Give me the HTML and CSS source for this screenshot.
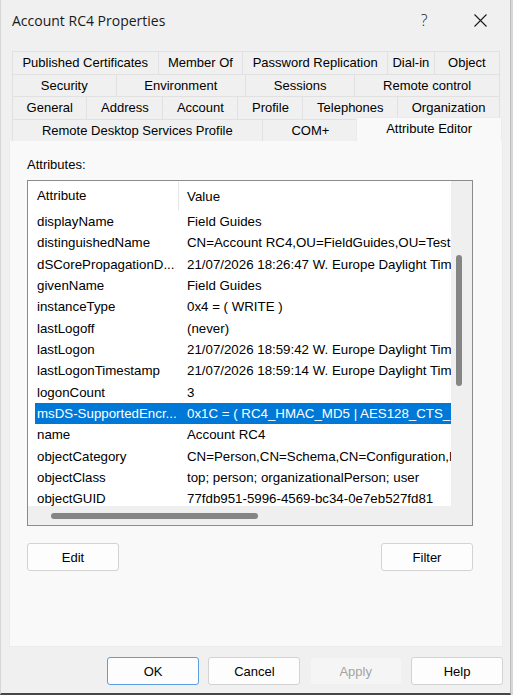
FILE: index.html
```html
<!DOCTYPE html>
<html>
<head>
<meta charset="utf-8">
<link rel="stylesheet" href="styles.css">
</head>
<body>
<div class="window">
  <div class="titlebar">
    <span class="title">Account RC4 Properties</span>
    <span class="help">?</span>
    <span class="close"><svg width="13" height="13" viewBox="0 0 13 13"><path d="M0.5 0.5 L12.5 12.5 M12.5 0.5 L0.5 12.5" stroke="#1a1a1a" stroke-width="1.1" fill="none"/></svg></span>
  </div>
  <div class="tabs">
    <div class="tabrow">
      <div class="tab">Published Certificates</div>
      <div class="tab">Member Of</div>
      <div class="tab">Password Replication</div>
      <div class="tab narrow">Dial-in</div>
      <div class="tab wide">Object</div>
    </div>
    <div class="tabrow">
      <div class="tab">Security</div>
      <div class="tab">Environment</div>
      <div class="tab">Sessions</div>
      <div class="tab">Remote control</div>
    </div>
    <div class="tabrow">
      <div class="tab">General</div>
      <div class="tab">Address</div>
      <div class="tab">Account</div>
      <div class="tab">Profile</div>
      <div class="tab">Telephones</div>
      <div class="tab">Organization</div>
    </div>
    <div class="tabrow">
      <div class="tab">Remote Desktop Services Profile</div>
      <div class="tab">COM+</div>
      <div class="tab active">Attribute Editor</div>
    </div>
  </div>
  <div class="panel">
    <div class="label">Attributes:</div>
    <div class="listbox">
      <div class="listmain">
        <div class="listcontent">
          <div class="lhead"><div class="c1">Attribute</div><div class="c2">Value</div></div>
          <div class="lrow"><div class="c1">displayName</div><div class="c2">Field Guides</div></div>
          <div class="lrow"><div class="c1">distinguishedName</div><div class="c2">CN=Account RC4,OU=FieldGuides,OU=Test,DC=corp,DC=local</div></div>
          <div class="lrow"><div class="c1">dSCorePropagationD...</div><div class="c2">21/07/2026 18:26:47 W. Europe Daylight Time</div></div>
          <div class="lrow"><div class="c1">givenName</div><div class="c2">Field Guides</div></div>
          <div class="lrow"><div class="c1">instanceType</div><div class="c2">0x4 = ( WRITE )</div></div>
          <div class="lrow"><div class="c1">lastLogoff</div><div class="c2">(never)</div></div>
          <div class="lrow"><div class="c1">lastLogon</div><div class="c2">21/07/2026 18:59:42 W. Europe Daylight Time</div></div>
          <div class="lrow"><div class="c1">lastLogonTimestamp</div><div class="c2">21/07/2026 18:59:14 W. Europe Daylight Time</div></div>
          <div class="lrow"><div class="c1">logonCount</div><div class="c2">3</div></div>
          <div class="lrow selected"><div class="c1">msDS-SupportedEncr...</div><div class="c2">0x1C = ( RC4_HMAC_MD5 | AES128_CTS_HMAC_SHA1_96 | AES256_CTS_HMAC_SHA1_96 )</div></div>
          <div class="lrow"><div class="c1">name</div><div class="c2">Account RC4</div></div>
          <div class="lrow"><div class="c1">objectCategory</div><div class="c2">CN=Person,CN=Schema,CN=Configuration,DC=corp,DC=local</div></div>
          <div class="lrow"><div class="c1">objectClass</div><div class="c2">top; person; organizationalPerson; user</div></div>
          <div class="lrow"><div class="c1">objectGUID</div><div class="c2">77fdb951-5996-4569-bc34-0e7eb527fd81</div></div>
        </div>
        <div class="vscroll"><div class="vthumb"></div></div>
      </div>
      <div class="hscrollrow">
        <div class="hscroll"><div class="hthumb"></div></div>
        <div class="corner"></div>
      </div>
    </div>
    <div class="panelbtns">
      <button class="btn">Edit</button>
      <button class="btn">Filter</button>
    </div>
  </div>
  <div class="footer">
    <button class="btn ok">OK</button>
    <button class="btn">Cancel</button>
    <button class="btn disabled">Apply</button>
    <button class="btn">Help</button>
  </div>
</div>
</body>
</html>
```
FILE: styles.css
```css
* { box-sizing: border-box; }
html, body {
  margin: 0;
  padding: 0;
  width: 513px;
  height: 695px;
  overflow: hidden;
  background: #d8d8d8;
}
.window {
  width: 511px;
  height: 695px;
  background: #f0f0f0;
  border-left: 1px solid #d6d6d6;
  border-right: 1px solid #bdbdbd;
  border-bottom: 2px solid #474747;
  font-family: "Liberation Sans", Arial, sans-serif;
  font-size: 13px;
  color: #000;
  display: flex;
  flex-direction: column;
}
.titlebar {
  height: 40px;
  display: flex;
  align-items: center;
  padding-left: 11px;
}
.title {
  font-family: "Open Sans", "Noto Sans", sans-serif;
  font-size: 14px;
  color: #1a1a1a;
  flex: 1;
}
.help {
  font-family: "Open Sans", "Noto Sans", sans-serif;
  font-size: 16px;
  font-weight: 300;
  color: #1a1a1a;
  width: 16px;
  text-align: center;
  margin-right: 42px;
}
.close {
  display: flex;
  margin-right: 23px;
}
.tabs {
  margin-top: 11px;
  margin-left: 11px;
  width: 488px;
  display: flex;
  flex-direction: column;
}
.tabrow {
  display: flex;
  height: 22.5px;
}
.tab {
  flex: 1 1 auto;
  padding: 0 9px;
  text-align: center;
  white-space: nowrap;
  line-height: 21px;
  border-top: 1px solid #e1e1e1;
  border-left: 1px solid #e1e1e1;
  background: #f0f0f0;
  color: #000;
}
.tab.narrow { padding: 0 4px; }
.tab.wide { padding: 0 13px; }
.tab:last-child { border-right: 1px solid #e1e1e1; }
.tab.active {
  margin: -2px -2px 0 -2px;
  height: 24.5px;
  background: #f9f9f9;
  border-color: #ececec;
  line-height: 21px;
  position: relative;
  z-index: 1;
}
.panel {
  margin-left: 8px;
  width: 494px;
  height: 506px;
  background: #f9f9f9;
  border: 1px solid #ececec;
  border-top: none;
  padding: 16px 0 0 17px;
  display: flex;
  flex-direction: column;
}
.label {
  line-height: 16px;
  height: 16px;
}
.listbox {
  margin-top: 7px;
  width: 446px;
  height: 346px;
  border: 1px solid #8c8c8c;
  background: #fff;
  display: flex;
  flex-direction: column;
  font-size: 13.3px;
}
.listmain {
  display: flex;
  height: 325px;
}
.listcontent {
  flex: 1;
  overflow: hidden;
  padding-left: 7px;
}
.lhead {
  display: flex;
  height: 30px;
  align-items: center;
}
.lhead .c1 {
  border-right: 1px solid #e5e5e5;
  height: 28px;
  line-height: 28px;
}
.lrow {
  display: flex;
  height: 21.33px;
  line-height: 21.33px;
  white-space: nowrap;
}
.c1 {
  width: 144px;
  flex: none;
  padding-left: 2px;
  overflow: hidden;
  white-space: nowrap;
}
.c2 {
  flex: 1;
  padding-left: 8px;
  overflow: hidden;
  white-space: nowrap;
}
.lrow.selected {
  background: #0078d7;
  color: #fff;
}
.vscroll {
  width: 21px;
  flex: none;
  background: #efefef;
  position: relative;
}
.vthumb {
  position: absolute;
  left: 5px;
  top: 74px;
  width: 6px;
  height: 131px;
  border-radius: 3px;
  background: #858585;
}
.hscrollrow {
  display: flex;
  height: 19px;
}
.hscroll {
  flex: 1;
  background: #efefef;
  position: relative;
}
.hthumb {
  position: absolute;
  left: 23px;
  top: 7px;
  width: 207px;
  height: 6px;
  border-radius: 3px;
  background: #858585;
}
.corner {
  width: 21px;
  background: #efefef;
}
.panelbtns {
  margin-top: 17px;
  width: 446px;
  display: flex;
  justify-content: space-between;
}
.btn {
  width: 92px;
  height: 28px;
  font-family: "Liberation Sans", Arial, sans-serif;
  font-size: 13px;
  color: #000;
  background: #fdfdfd;
  border: 1px solid #d3d3d3;
  border-radius: 3px;
  padding: 0;
}
.footer {
  margin-top: 10px;
  display: flex;
  justify-content: flex-end;
  gap: 9.3px;
  padding-right: 7px;
}
.btn.ok {
  border-color: #5a9de0;
}
.btn.disabled {
  background: #f5f5f5;
  border-color: #f0f0f0;
  color: #a3a3a3;
}
```
